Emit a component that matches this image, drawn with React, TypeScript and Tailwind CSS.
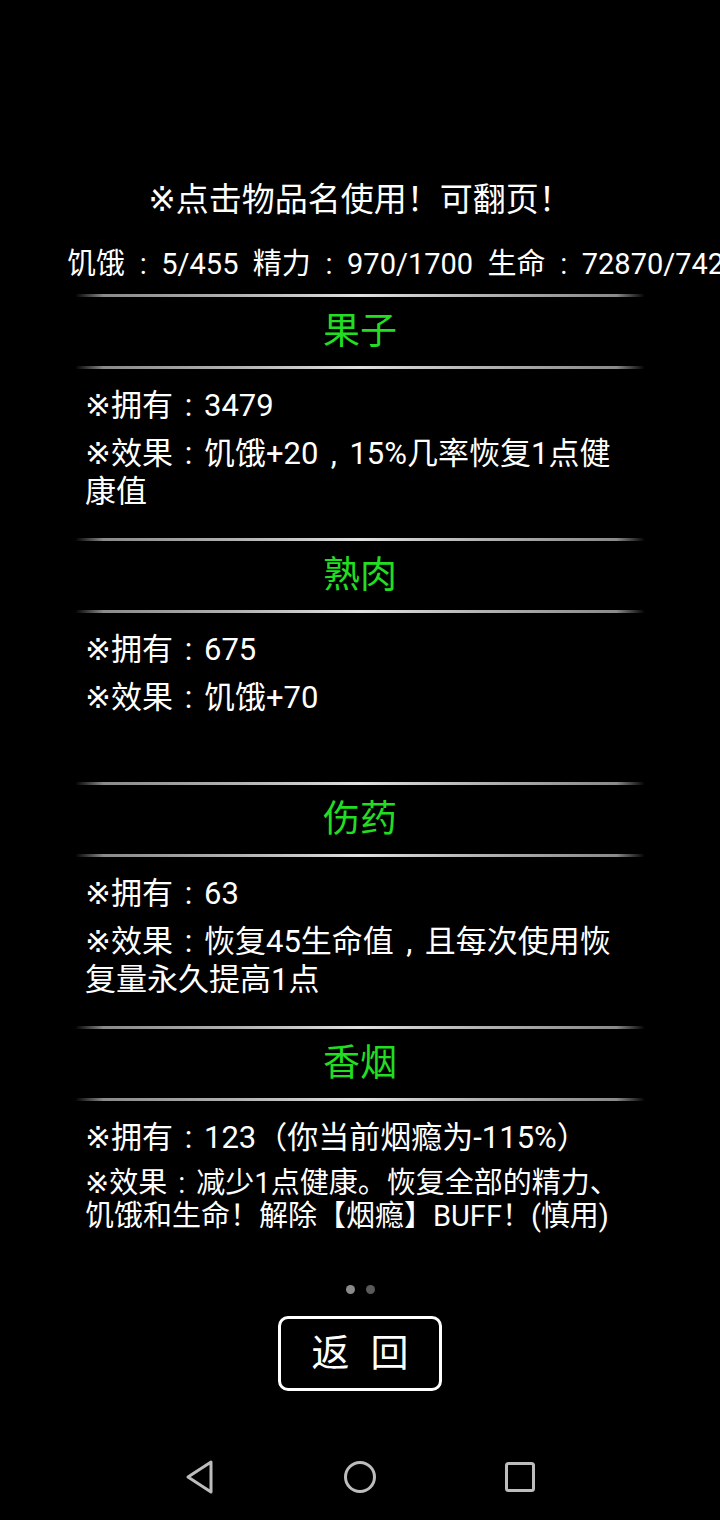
import React from "react";

interface Item {
  name: string;
  owned: React.ReactNode;
  effect: React.ReactNode;
  small?: boolean;
}

// Full-width punctuation centred in its box, as the reference shows it
const C = ({ ch = ":" }: { ch?: string }) => (
  <span className="inline-block w-[1em] text-center">{ch}</span>
);

const WideColon = () => <span className="inline-block w-[1.25em] text-center">:</span>;

const Mark = () => <span className="font-['DejaVu_Sans',sans-serif]">※</span>;

const items: Item[] = [
  {
    name: "果子",
    owned: "3479",
    effect: (
      <>
        饥饿+20
        <C ch="," />
        15%几率恢复1点健康值
      </>
    ),
  },
  { name: "熟肉", owned: "675", effect: "饥饿+70" },
  {
    name: "伤药",
    owned: "63",
    effect: (
      <>
        恢复45生命值
        <C ch="," />
        且每次使用恢复量永久提高1点
      </>
    ),
  },
  {
    name: "香烟",
    owned: "123（你当前烟瘾为-115%）",
    effect: "减少1点健康。恢复全部的精力、饥饿和生命！解除【烟瘾】BUFF！(慎用)",
    small: true,
  },
];

const Divider = () => (
  <div className="mx-[75px] h-[3px] rounded-full bg-[linear-gradient(to_right,transparent,#8a8a8a_5%,#b5b5b5_30%,#e0e0e0_50%,#b5b5b5_70%,#8a8a8a_95%,transparent)]" />
);

const ItemBlock = ({ item }: { item: Item }) => (
  <div>
    <Divider />
    <div className="flex h-[69px] items-center justify-center text-[37px] text-[#22dd22]">
      {item.name}
    </div>
    <Divider />
    <div className="h-[169px] pl-[85px] pr-[92px] pt-[17px] text-white">
      <div className="text-[31px] leading-[38px] whitespace-nowrap">
        <Mark />
        拥有
        <C />
        {item.owned}
      </div>
      {item.small ? (
        <div className="mt-[10px] text-[29px] leading-[33px]">
          <Mark />
          效果
          <C />
          {item.effect}
        </div>
      ) : (
        <div className="mt-[9px] text-[31px] leading-[38px]">
          <Mark />
          效果
          <C />
          {item.effect}
        </div>
      )}
    </div>
  </div>
);

export default function App() {
  return (
    <div className="flex min-h-[1520px] w-full flex-col overflow-hidden bg-black font-[Roboto,'Noto_Sans_CJK_SC',sans-serif] text-white">
      <div className="pt-[180px] text-center text-[33px] leading-[40px]">
        <Mark />点击物品名使用！可翻页！
      </div>
      <div className="mt-[26px] overflow-hidden whitespace-pre pl-[67px] text-[29px] leading-[36px]">
        饥饿<WideColon />5/455  精力<WideColon />970/1700  生命<WideColon />72870/74290
      </div>
      <div className="mt-[12px]">
        {items.map((item) => (
          <ItemBlock key={item.name} item={item} />
        ))}
      </div>
      <div className="mt-[15px] flex justify-center gap-[11px]">
        <span className="h-[9px] w-[9px] rounded-full bg-[#8a8a8a]" />
        <span className="h-[9px] w-[9px] rounded-full bg-[#5a5a5a]" />
      </div>
      <div className="mt-[22px] flex justify-center">
        <button className="flex h-[75px] w-[164px] items-center justify-center gap-[21px] rounded-[10px] border-[3px] border-white text-[38px] text-white">
          <span>返</span>
          <span>回</span>
        </button>
      </div>
      <div className="mt-auto flex h-[86px] items-center justify-center gap-[128px]">
        <svg width="32" height="36" viewBox="0 0 32 36" fill="none" stroke="#bdbdbd" strokeWidth="3" strokeLinejoin="round">
          <path d="M4 18 L27 3 L27 33 Z" />
        </svg>
        <svg width="32" height="32" viewBox="0 0 32 32" fill="none" stroke="#bdbdbd" strokeWidth="3">
          <circle cx="16" cy="16" r="14.5" />
        </svg>
        <svg width="32" height="32" viewBox="0 0 32 32" fill="none" stroke="#bdbdbd" strokeWidth="3">
          <rect x="2.5" y="2.5" width="27" height="27" rx="2" />
        </svg>
      </div>
    </div>
  );
}
